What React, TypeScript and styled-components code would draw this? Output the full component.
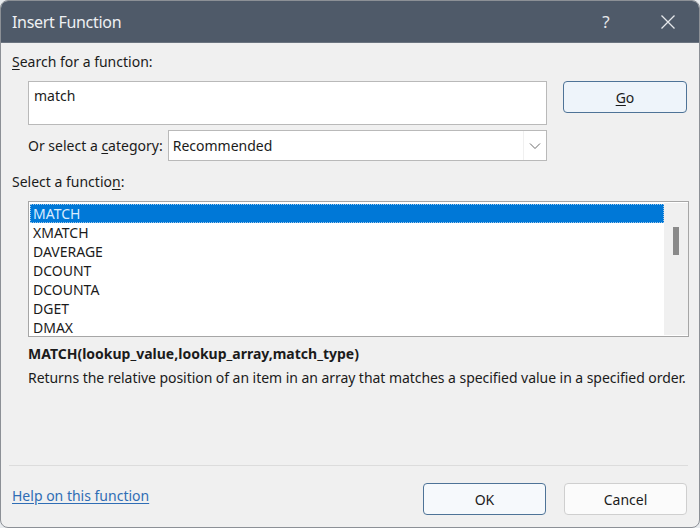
import React from 'react'
import styled, { createGlobalStyle } from 'styled-components'

const GlobalStyle = createGlobalStyle`
    html, body {
        margin: 0;
        padding: 0;
        background: #e9ecef;
    }
    body {
        font-family: 'Noto Sans', 'Open Sans', sans-serif;
        color: #1b1b1b;
    }
`

const Window = styled.div`
    box-sizing: border-box;
    width: 700px;
    height: 528px;
    display: flex;
    flex-direction: column;
    border: 1px solid #8c9096;
    border-radius: 8px;
    overflow: hidden;
    background: #f0f0f0;
`

const TitleBar = styled.div`
    height: 41px;
    flex: none;
    display: flex;
    align-items: center;
    background: #4f5a69;
    padding-left: 11px;
    border-bottom: 1px solid #6b7480;
`

const Title = styled.div`
    flex: 1;
    font-size: 16px;
    color: #eef0f3;
    letter-spacing: -0.3px;
`

const TitleButton = styled.div`
    width: 62px;
    height: 41px;
    display: flex;
    align-items: center;
    justify-content: center;
    color: #e6e8eb;
    font-size: 17px;
`

const Body = styled.div`
    flex: 1;
    display: flex;
    flex-direction: column;
    padding: 9px 12px 0 11px;
`

const Label = styled.div<{ $indent?: boolean }>`
    font-size: 14px;
    line-height: 20px;
    padding-left: ${(p) => (p.$indent ? '16px' : '0')};
    white-space: nowrap;
`

const Key = styled.span`
    text-decoration: underline;
    text-underline-offset: 2px;
`

const SearchGrid = styled.div`
    display: grid;
    grid-template-columns: 519px 1fr;
    column-gap: 16px;
    row-gap: 5px;
    margin: 9px 0 0 16px;
    align-items: start;
`

const SearchBox = styled.div`
    box-sizing: border-box;
    height: 44px;
    background: #fff;
    border: 1px solid #b9b9b9;
    padding: 4px 5px;
    font-size: 14px;
    line-height: 20px;
`

const Button = styled.div<{ $primary?: boolean }>`
    box-sizing: border-box;
    width: 124px;
    height: 32px;
    display: flex;
    align-items: center;
    justify-content: center;
    border-radius: 4px;
    border: 1px solid ${(p) => (p.$primary ? '#4e7397' : '#cfcfcf')};
    background: ${(p) => (p.$primary ? '#f6f9fc' : '#fbfbfb')};
    font-size: 14px;
    color: #1b1b1b;
`

const GoButton = styled(Button)`
    background: #eef4fa;
`

const CategoryRow = styled.div`
    display: flex;
    align-items: center;
    gap: 5px;
    margin-left: -16px;
    padding-left: 16px;
`

const Select = styled.div`
    box-sizing: border-box;
    flex: 1;
    height: 31px;
    display: flex;
    align-items: center;
    background: #fff;
    border: 1px solid #b9b9b9;
`

const SelectValue = styled.div`
    flex: 1;
    padding-left: 4px;
    font-size: 14px;
`

const SelectArrow = styled.div`
    width: 22px;
    height: 29px;
    display: flex;
    align-items: center;
    justify-content: center;
    border-left: 1px solid #f0f0f0;
`

const SectionLabel = styled(Label)`
    margin-top: 11px;
`

const ListBox = styled.div`
    box-sizing: border-box;
    height: 136px;
    margin: 9px 0 0 16px;
    width: 661px;
    border: 1px solid #a6a6a6;
    background: #fff;
    display: flex;
    padding: 2px 0 1px 1px;
`

const Items = styled.div`
    flex: 1;
`

const Item = styled.div<{ $selected?: boolean }>`
    height: 19px;
    line-height: 19px;
    padding-left: 3px;
    font-size: 14px;
    background: ${(p) => (p.$selected ? '#0078d7' : 'transparent')};
    color: ${(p) => (p.$selected ? '#d9ecff' : '#1b1b1b')};
    outline: ${(p) => (p.$selected ? '1px dotted #9cc6ea' : 'none')};
    outline-offset: -1px;
`

const ScrollTrack = styled.div`
    width: 24px;
    margin-top: -1px;
    background: #f0f0f0;
    display: flex;
    justify-content: center;
    padding-top: 24px;
`

const ScrollThumb = styled.div`
    width: 6px;
    height: 28px;
    background: #8a8a8a;
`

const Signature = styled.div`
    margin: 6px 0 0 16px;
    font-size: 14px;
    line-height: 22px;
    font-weight: 700;
`

const Description = styled.div`
    margin: 2px 0 0 16px;
    font-size: 14px;
    line-height: 22px;
    white-space: nowrap;
    letter-spacing: -0.05px;
`

const Separator = styled.div`
    margin: auto -1px 0 -3px;
    height: 1px;
    flex: none;
    background: #dcdcdc;
`

const Footer = styled.div`
    height: 61px;
    flex: none;
    display: flex;
    align-items: flex-start;
    gap: 18px;
    padding-top: 17px;
    box-sizing: border-box;
`

const HelpLink = styled.a`
    flex: 1;
    align-self: flex-start;
    margin-top: 3px;
    color: #2f6db5;
    font-size: 14px;
    line-height: 20px;
    text-decoration: underline;
    text-underline-offset: 2px;
`

const FooterButton = styled(Button)`
    width: 123px;
`

const functions = ['MATCH', 'XMATCH', 'DAVERAGE', 'DCOUNT', 'DCOUNTA', 'DGET', 'DMAX']

const App = () => {
    return (
        <>
            <GlobalStyle />
            <Window>
                <TitleBar>
                    <Title>Insert Function</Title>
                    <TitleButton>?</TitleButton>
                    <TitleButton>
                        <svg width="16" height="16" viewBox="0 0 16 16">
                            <path d="M1.5 1.5 L14.5 14.5 M14.5 1.5 L1.5 14.5" stroke="#e6e8eb" strokeWidth="1.3" />
                        </svg>
                    </TitleButton>
                </TitleBar>
                <Body>
                    <Label>
                        <Key>S</Key>earch for a function:
                    </Label>
                    <SearchGrid>
                        <SearchBox>match</SearchBox>
                        <GoButton $primary>
                            <Key>G</Key>o
                        </GoButton>
                        <CategoryRow>
                            <Label>
                                Or select a <Key>c</Key>ategory:
                            </Label>
                            <Select>
                                <SelectValue>Recommended</SelectValue>
                                <SelectArrow>
                                    <svg width="12" height="8" viewBox="0 0 12 8">
                                        <path d="M1 1.5 L6 6.5 L11 1.5" fill="none" stroke="#6a6a6a" strokeWidth="1" />
                                    </svg>
                                </SelectArrow>
                            </Select>
                        </CategoryRow>
                    </SearchGrid>
                    <SectionLabel>
                        Select a functio<Key>n</Key>:
                    </SectionLabel>
                    <ListBox>
                        <Items>
                            {functions.map((name, i) => (
                                <Item key={name} $selected={i === 0}>
                                    {name}
                                </Item>
                            ))}
                        </Items>
                        <ScrollTrack>
                            <ScrollThumb />
                        </ScrollTrack>
                    </ListBox>
                    <Signature>MATCH(lookup_value,lookup_array,match_type)</Signature>
                    <Description>
                        Returns the relative position of an item in an array that matches a specified value in a
                        specified order.
                    </Description>
                    <Separator />
                    <Footer>
                        <HelpLink>Help on this function</HelpLink>
                        <FooterButton $primary>OK</FooterButton>
                        <FooterButton>Cancel</FooterButton>
                    </Footer>
                </Body>
            </Window>
        </>
    )
}

export default App
